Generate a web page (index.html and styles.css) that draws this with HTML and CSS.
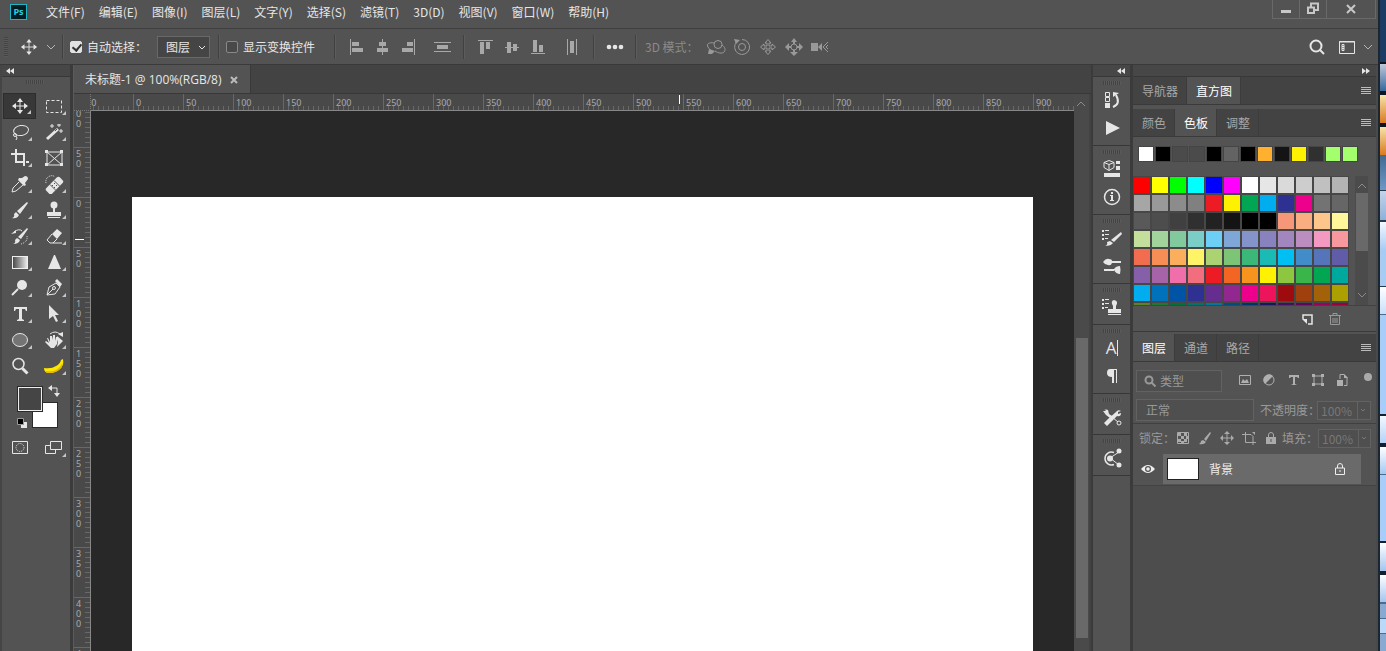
FILE: index.html
```html
<!DOCTYPE html>
<html lang="zh-CN">
<head>
    <meta charset="utf-8">
    <title>未标题-1</title>
    <link rel="stylesheet" href="styles.css">
</head>
<body>
<div class="app">

    <header class="menubar">
        <div class="logo">Ps</div>
        <nav class="menu">
            <a href="#">文件(F)</a>
            <a href="#">编辑(E)</a>
            <a href="#">图像(I)</a>
            <a href="#">图层(L)</a>
            <a href="#">文字(Y)</a>
            <a href="#">选择(S)</a>
            <a href="#">滤镜(T)</a>
            <a href="#">3D(D)</a>
            <a href="#">视图(V)</a>
            <a href="#">窗口(W)</a>
            <a href="#">帮助(H)</a>
        </nav>
        <div class="window-buttons">
            <button aria-label="最小化"><svg viewBox="0 0 20 20"><path d="M5 11h10v3H5z"/></svg></button>
            <button aria-label="还原"><svg viewBox="0 0 20 20" class="line thick"><path d="M8 9V4.500h7V11h-4M5 8.500h6V14H5z"/></svg></button>
            <button aria-label="关闭" class="wide"><svg viewBox="0 0 20 20" class="line thick"><path d="M6 6l8 8M14 6l-8 8"/></svg></button>
        </div>
    </header>

    <div class="options">
        <span class="grip-v"></span>
        <button class="tool-current" aria-label="移动工具">
            <svg viewBox="0 0 20 20" class="line"><path d="M10 3v14M3 10h14"/><path class="fill" d="M10 1l3 4H7zM10 19l3-4H7zM1 10l4-3v6zM19 10l-4-3v6z"/></svg>
        </button>
        <button class="mini" aria-label="预设"><svg viewBox="0 0 10 10" class="line"><path d="M1 3l4 4 4-4"/></svg></button>
        <span class="sep"></span>
        <input type="checkbox" id="auto-select" checked>
        <label for="auto-select" class="auto-label">自动选择：</label>
        <div class="dropdown">
            <select aria-label="自动选择对象"><option>图层</option></select>
            <svg viewBox="0 0 10 10" class="line"><path d="M2 3l3 3 3-3"/></svg>
        </div>
        <span class="sep"></span>
        <input type="checkbox" id="show-transform">
        <label for="show-transform" class="transform-label">显示变换控件</label>
        <span class="sep"></span>
        <div class="align-group first">
            <button aria-label="左对齐"><svg viewBox="0 0 20 20"><path d="M4 2h1v16H4zM6 5h7v4H6zM6 11h11v4H6z"/></svg></button>
            <button aria-label="水平居中对齐"><svg viewBox="0 0 20 20"><path d="M10 2h1v16h-1zM7 5h7v4H7zM5 11h11v4H5z"/></svg></button>
            <button aria-label="右对齐"><svg viewBox="0 0 20 20"><path d="M16 2h1v16h-1zM9 5h6v4H9zM4 11h11v4H4z"/></svg></button>
        </div>
        <div class="align-group">
            <button aria-label="垂直分布"><svg viewBox="0 0 20 20"><path d="M2 5h17v1H2zM5 8h11v4H5zM2 14h17v1H2z"/></svg></button>
        </div>
        <span class="sep"></span>
        <div class="align-group">
            <button aria-label="顶对齐"><svg viewBox="0 0 20 20"><path d="M2 3h15v1H2zM4 5h4v12H4zM10 5h4v7h-4z"/></svg></button>
            <button aria-label="垂直居中对齐"><svg viewBox="0 0 20 20"><path d="M3 10h14v1H3zM5 5h4v11H5zM11 7h4v7h-4z"/></svg></button>
            <button aria-label="底对齐"><svg viewBox="0 0 20 20"><path d="M3 16h14v1H3zM5 3h4v12H5zM11 8h4v7h-4z"/></svg></button>
        </div>
        <div class="align-group">
            <button aria-label="水平分布"><svg viewBox="0 0 20 20"><path d="M5 2h1v16H5zM8 4h4v12H8zM14 2h1v16h-1z"/></svg></button>
        </div>
        <span class="sep"></span>
        <button class="more" aria-label="更多"><svg viewBox="0 0 20 20"><circle cx="4" cy="10" r="2.300"/><circle cx="10" cy="10" r="2.300"/><circle cx="16" cy="10" r="2.300"/></svg></button>
        <span class="sep"></span>
        <span class="mode-label">3D 模式：</span>
        <div class="mode-group">
            <button aria-label="环绕移动"><svg viewBox="0 0 20 20" class="line"><circle cx="12" cy="7.500" r="4"/><path d="M8 6C3 5 0 7 2 10s2 3 3 3M16 8c3 2 4 5 2 7s-6 1-9-1"/><path class="fill" d="M3 12l6 2-3 3H2z"/></svg></button>
            <button aria-label="滚动"><svg viewBox="0 0 20 20" class="line"><circle cx="10" cy="10" r="3.500"/><path d="M5 4.500a7.500 7.500 0 1 0 5-2"/><path class="fill" d="M2 2l6 1-4 4z"/></svg></button>
            <button aria-label="平移"><svg viewBox="0 0 20 20" class="line"><path d="M10 2.500l3 3.500h-2v3h3V7l3.500 3-3.500 3v-2h-3v3h2l-3 3.500L7 14h2v-3H6v2l-3.500-3L6 7v2h3V6H7z"/></svg></button>
            <button aria-label="滑动"><svg viewBox="0 0 20 20"><circle class="stroke" cx="10" cy="10" r="3"/><path d="M10 1l3 4h-2v2H9V5H7zM1 10l4-4v3h2v2H5v3zM19 10l-4-4v3h-2v2h2v3zM10 19l4-4h-3v-2H9v2H6z"/></svg></button>
            <button aria-label="缩放"><svg viewBox="0 0 20 20" class="line"><path class="fill" d="M1 6h7v8H1zM8 10l4-4v8z"/><path d="M18 5l-5 5 5 5M18 8l-2 2 2 2"/></svg></button>
        </div>
        <div class="options-right">
            <button aria-label="搜索"><svg viewBox="0 0 20 20" class="line thick"><circle cx="9" cy="9" r="5.500"/><path d="M13 13l4 4"/></svg></button>
            <button aria-label="工作区"><svg viewBox="0 0 20 20" class="line"><path d="M2.500 4.500h15v12h-15zM2 5h16M5 7.500h2v6H5zM5 9.500h2M5 11.500h2"/></svg></button>
            <button class="mini" aria-label="选择工作区"><svg viewBox="0 0 10 10" class="line"><path d="M1 3l4 4 4-4"/></svg></button>
        </div>
    </div>

    <main class="workspace">

        <aside class="toolbox">
            <div class="collapse"><svg viewBox="0 0 10 10"><path d="M5 2v6L1 5zM9 2v6L5 5z"/></svg></div>
            <div class="grip"></div>
            <div class="tools">
                <button class="has-more active" aria-label="移动"><svg viewBox="0 0 20 20" class="line"><path d="M10 3v14M3 10h14"/><path class="fill" d="M10 2l3 4H7zM10 18l3-4H7zM2 10l4-3v6zM18 10l-4-3v6z"/></svg></button>
                <button class="has-more" aria-label="矩形选框"><svg viewBox="0 0 20 20" class="line"><rect x="2.500" y="4.500" width="15" height="12" stroke-dasharray="3 2"/></svg></button>
                <button class="has-more" aria-label="套索"><svg viewBox="0 0 20 20" class="line"><ellipse cx="11" cy="8.500" rx="7.500" ry="5" transform="rotate(-10 11 8)"/><circle cx="5" cy="13" r="1.500"/><path d="M6 14q2 2 0 4"/></svg></button>
                <button class="has-more" aria-label="魔棒"><svg viewBox="0 0 20 20" class="line"><path stroke-width="3" d="M3 17L14 7"/><path d="M8 2v4M6 4h4M15 2v3M13 3h4M17 7v4M15 9h4"/><path class="cut" d="M11 9l2-2"/></svg></button>
                <button class="has-more" aria-label="裁剪"><svg viewBox="0 0 20 20" class="line thick"><path d="M1 6h13v12M6 1v13h8"/><path class="fill" d="M16 13h3v2h-3z"/></svg></button>
                <button aria-label="图框"><svg viewBox="0 0 20 20" class="line"><path d="M3 4h15v13H3zM3 4l15 13M18 4L3 17"/><path class="fill" d="M1 2h3v3H1zM16 2h3v3h-3zM1 15h3v3H1zM16 15h3v3h-3z"/></svg></button>
                <button class="has-more" aria-label="吸管"><svg viewBox="0 0 20 20" class="line"><path class="fill" d="M12 4l3-2q3 0 3 3l-3 4 1 2-2 1-6-6 1-2z"/><path d="M9 8l-6 6-1 4 4-1 7-6"/></svg></button>
                <button class="has-more" aria-label="修复画笔"><svg viewBox="0 0 20 20"><rect x="1" y="7.500" width="19" height="8" rx="2" transform="rotate(-45 10.500 11.500)"/><path class="cut" d="M6 10.500l6 6M10 6.500l6 6"/><path class="dots" d="M2 9q-1-5 4-7 3-1 5 1"/><path fill="#535353" d="M10 9h1v1h-1zM12 11h1v1h-1zM8 11h1v1H8zM10 13h1v1h-1z"/></svg></button>
                <button class="has-more" aria-label="画笔"><svg viewBox="0 0 20 20"><path d="M17 2l1 1-8 11-3-3zM6 12l3 3q-2 4-7 3 3-1 2-4z"/></svg></button>
                <button class="has-more" aria-label="仿制图章"><svg viewBox="0 0 20 20"><circle cx="10" cy="5" r="3.500"/><path d="M9 7h2v5h6v4H3v-4h6zM4 17h12v1H4z"/></svg></button>
                <button class="has-more" aria-label="历史记录画笔"><svg viewBox="0 0 20 20"><path d="M17 2l1 1-7 10-3-2zM7 12l3 2q-1 4-7 4 3-1 2-4zM1 8l5-4v3z"/><path class="stroke" d="M4 6q5-4 8-1"/><path class="dots" d="M17 10q1 6-6 8"/></svg></button>
                <button class="has-more" aria-label="橡皮擦"><svg viewBox="0 0 20 20" class="line"><path class="fill" d="M8 8l5-5 5 4-5 6z"/><path d="M8 8l-5 6 3 3h3l4-4M9 17h9"/></svg></button>
                <button class="has-more" aria-label="渐变"><svg viewBox="0 0 20 20"><defs><linearGradient id="gray"><stop stop-color="#444"/><stop offset="1" stop-color="#eee"/></linearGradient></defs><rect x="2.500" y="4.500" width="15" height="12" fill="url(#gray)" stroke="#eee"/></svg></button>
                <button class="has-more" aria-label="锐化"><svg viewBox="0 0 20 20"><path d="M10 3h1l6 14H4z"/></svg></button>
                <button class="has-more" aria-label="减淡"><svg viewBox="0 0 20 20" class="line thick"><circle class="fill" cx="12" cy="7" r="5"/><path d="M8 11l-6 6"/></svg></button>
                <button class="has-more" aria-label="钢笔"><svg viewBox="0 0 20 20" class="line"><path d="M3 17l2-8 7-4 4 4-5 7zM3 17l6-6"/><circle cx="10" cy="10" r="1.500"/><path class="fill" d="M11 3l2-2 5 5-2 3z"/></svg></button>
                <button class="has-more" aria-label="文字"><svg viewBox="0 0 20 20"><path d="M4 3h13v4h-1l-1-2h-3v10l2 1v1H7v-1l2-1V5H6L5 7H4z"/></svg></button>
                <button class="has-more" aria-label="路径选择"><svg viewBox="0 0 20 20"><path d="M5 1l10 10h-4l3 6-2 1-3-6-4 3z"/></svg></button>
                <button class="has-more" aria-label="椭圆"><svg viewBox="0 0 20 20" class="line"><ellipse cx="10" cy="10" rx="7.500" ry="6.500" fill="#747474"/></svg></button>
                <button class="has-more" aria-label="抓手"><svg viewBox="0 0 20 20"><path d="M4 8l2 4V6h2l1 4V5h2v6l1-4h2l-1 7-3 4H7l-6-6 1-1 3 2-2-5zM13 6l6 5-6 6 1-5z"/><path class="stroke" d="M6 4q5-4 10 0"/><path d="M14 4l5-2v5z"/></svg></button>
                <button aria-label="缩放"><svg viewBox="0 0 20 20" class="line"><circle cx="8.500" cy="8" r="5.500" stroke-width="1.500"/><path stroke-width="3" d="M12.500 12.500l5 5"/></svg></button>
                <button class="has-more" aria-label="编辑工具栏"><svg viewBox="0 0 20 20"><path fill="#ffe900" d="M0 12q8 1 12-2 4-2 5-6l2-1q1 6-2 9-4 5-12 5-5 0-5-5z"/><path fill="#e5b800" d="M1 15q7 1 11-1 5-3 6-7 1 4-2 6-4 4-11 4-3 0-4-2z"/></svg></button>
            </div>
            <div class="colors">
                <button class="back" aria-label="背景色"></button>
                <button class="front" aria-label="前景色"></button>
                <button class="swap" aria-label="切换颜色"><svg viewBox="0 0 12 12" class="line"><path d="M3 3h6v6"/><path class="fill" d="M4 0v6L0 3zM6 8h6l-3 4z"/></svg></button>
                <button class="reset" aria-label="默认颜色"><svg viewBox="0 0 12 12"><path d="M5 5h6v6H5z"/><path fill="#000" stroke="#999" d="M1.500 1.500h6v6h-6z"/></svg></button>
            </div>
            <div class="tools">
                <button aria-label="快速蒙版"><svg viewBox="0 0 20 20" class="line"><path d="M2.500 3.500h15v12h-15z"/><circle cx="10" cy="9.500" r="4" stroke-dasharray="1 1"/></svg></button>
                <button class="has-more" aria-label="屏幕模式"><svg viewBox="0 0 20 20" class="line"><path d="M6 7.500H1.500v8h10V12M6.500 3.500h11v8h-11z"/></svg></button>
            </div>
        </aside>

        <section class="document">
            <div class="tabs">
                <div class="tab">未标题-1 @ 100%(RGB/8)<button aria-label="关闭文档"><svg viewBox="0 0 10 10" class="line thick"><path d="M2 2l6 6M8 2L2 8"/></svg></button></div>
            </div>
            <div class="view">
                <div class="ruler-corner"></div>
                <div class="ruler ruler-x"><div class="marks" id="marks-x"></div><span class="pointer"></span></div>
                <div class="ruler ruler-y"><div class="marks" id="marks-y"></div><span class="pointer"></span></div>
                <div class="canvas"><div class="page"></div></div>
                <div class="scroll">
                    <svg viewBox="0 0 10 10" class="line"><path d="M1 7l4-4 4 4"/></svg>
                    <div class="thumb"></div>
                </div>
            </div>
        </section>

        <aside class="dock">
            <div class="collapse"><svg viewBox="0 0 10 10"><path d="M5 2v6L1 5zM9 2v6L5 5z"/></svg></div>
            <div class="dock-group">
                <button aria-label="历史记录"><svg viewBox="0 0 20 20" class="line"><path d="M3.500 2.500h4v4h-4zM3.500 7.500h4v4h-4z"/><path class="fill" d="M3 13h5v5H3z"/><path stroke-width="2" d="M11 17q8-3 3-12"/><path class="fill" d="M11 7V2l6 1z"/></svg></button>
                <button aria-label="动作"><svg viewBox="0 0 20 20"><path d="M4 3l14 7-14 7z"/></svg></button>
            </div>
            <div class="dock-group">
                <button aria-label="属性"><svg viewBox="0 0 20 20" class="line"><path d="M7 1.500l5 2v5l-5 3-5-3v-5zM2 3.500l5 2 5-2M7 5.500v6"/><path class="fill" d="M14 2h4v3h-4zM14 7h4v4h-4zM2 14h16v4H2z"/></svg></button>
                <button aria-label="信息"><svg viewBox="0 0 20 20" class="line"><circle cx="10" cy="10" r="7.500" stroke-width="1.500"/><path class="fill" d="M9 5h2v2H9zM8 8h3v5h1v1H8v-1h1V9H8z"/></svg></button>
            </div>
            <div class="dock-group">
                <button aria-label="画笔"><svg viewBox="0 0 20 20"><path d="M0 2h2v2H0zM3 2h4v1H3zM0 6h2v2H0zM3 6h4v1H3zM0 10h2v2H0zM3 10h3v1H3zM19 4l1 2-8 8-3-2zM8 13l3 2q-2 3-8 3 3-1 2-4z"/></svg></button>
                <button aria-label="画笔设置"><svg viewBox="0 0 20 20"><path d="M1 6q3-4 6-3 3 0 3 2h9v2h-9q-1 3-4 2-3 0-5-3zM2 13h10v2H2zM12 13q2-3 6-3 1 4 0 8-4 0-6-4z"/></svg></button>
            </div>
            <div class="dock-group">
                <button aria-label="仿制源"><svg viewBox="0 0 20 20"><path d="M0 2h2v2H0zM3 2h4v1H3zM0 6h2v2H0zM3 6h4v1H3zM0 10h2v2H0zM3 10h3v1H3zM11 9q-3-5 1-6 5 1 2 6v3h5v4H6v-4h5zM6 17h13v1H6z"/></svg></button>
            </div>
            <div class="dock-group">
                <button aria-label="字符"><span class="character">A</span></button>
                <button aria-label="段落"><svg viewBox="0 0 20 20"><path d="M8 3h7v14h-1V4h-2v13h-2v-6q-5 0-5-4t3-4z"/></svg></button>
            </div>
            <div class="dock-group">
                <button aria-label="工具预设"><svg viewBox="0 0 20 20"><path d="M2 2l4 1 1 4 3 2-2 2-4-3-3-4h2l1-1zM14 5q2-3 5-1l-3 1v2l3-1q0 4-4 3l-6 6-4 4-3-3 4-4z"/><path class="stroke" d="M10 10l6 5"/><circle class="stroke" cx="17" cy="16" r="2"/></svg></button>
            </div>
            <div class="dock-group">
                <button aria-label="修改键"><svg viewBox="0 0 20 20" class="line"><path stroke-width="1.500" d="M12 4.500a6.500 6.500 0 1 0 0 12"/><path d="M8 10l9-6M8 10l9 7"/><circle class="fill" cx="8" cy="10.500" r="3"/><circle class="fill" cx="17" cy="3" r="2.500"/><circle class="fill" cx="17" cy="17" r="2.500"/></svg></button>
            </div>
        </aside>

        <aside class="panels">
            <div class="collapse"><svg viewBox="0 0 10 10"><path d="M1 2l4 3-4 3zM5 2l4 3-4 3z"/></svg></div>

            <div class="panel-tabs">
                <button>导航器</button>
                <button class="active">直方图</button>
                <button class="panel-menu" aria-label="面板菜单"></button>
            </div>

            <div class="panel-tabs spaced">
                <button>颜色</button>
                <button class="active">色板</button>
                <button>调整</button>
                <button class="panel-menu" aria-label="面板菜单"></button>
            </div>
            <div class="swatches-panel">
                <div class="recent" id="recent"></div>
                <div class="swatch-box">
                    <div class="swatches" id="swatches"></div>
                    <div class="swatch-scroll">
                        <svg viewBox="0 0 10 10" class="line"><path d="M1 7l4-4 4 4"/></svg>
                        <div class="thumb"></div>
                        <svg viewBox="0 0 10 10" class="line"><path d="M1 3l4 4 4-4"/></svg>
                    </div>
                </div>
                <div class="panel-footer">
                    <button aria-label="新建色板"><svg viewBox="0 0 14 14" class="line thick"><path d="M3 7V3h9v9H8"/><path d="M2 7h5v5z" class="fill"/></svg></button>
                    <button aria-label="删除色板" class="dim"><svg viewBox="0 0 14 14" class="line"><path d="M1 3.500h12M5 3V1.500h4V3M2.500 4v8.500h9V4M5 6v5M7 6v5M9 6v5"/></svg></button>
                </div>
            </div>

            <div class="panel-tabs layers-tabs">
                <button class="active">图层</button>
                <button>通道</button>
                <button>路径</button>
                <button class="panel-menu" aria-label="面板菜单"></button>
            </div>
            <div class="layers-panel">
                <div class="filter-row">
                    <div class="field filter-field">
                        <svg viewBox="0 0 14 14" class="line thick"><circle cx="6" cy="6" r="3.500"/><path d="M8.500 8.500l4 4"/></svg>
                        <select aria-label="筛选类型"><option>类型</option></select>
                    </div>
                    <div class="filter-icons">
                        <button aria-label="像素图层"><svg viewBox="0 0 14 14" class="line"><path d="M1.500 2.500h11v9h-11z"/><path class="fill" d="M3 10l2-4 2 2 2-2 2 4z"/></svg></button>
                        <button aria-label="调整图层"><svg viewBox="0 0 14 14" class="line"><circle cx="7" cy="7" r="5"/><path class="fill" d="M3 11a5 5 0 0 1 8-8z"/></svg></button>
                        <button aria-label="文字图层"><svg viewBox="0 0 14 14"><path d="M2 2h10v3h-1l-1-1H8v7l2 1H4l2-1V4H4L3 5H2z"/></svg></button>
                        <button aria-label="形状图层"><svg viewBox="0 0 14 14" class="line"><path d="M3 3h8v8H3z"/><path class="fill" d="M1 1h3v3H1zM10 1h3v3h-3zM1 10h3v3H1zM10 10h3v3h-3z"/></svg></button>
                        <button aria-label="智能对象"><svg viewBox="0 0 14 14" class="line"><path d="M5 6V1.500h4l3 3v8H9"/><path class="fill" d="M2 7h6v6H2zM9 1l4 4H9z"/></svg></button>
                    </div>
                    <span class="filter-toggle"></span>
                </div>
                <div class="blend-row">
                    <select class="field blend" aria-label="混合模式"><option>正常</option></select>
                    <label for="opacity">不透明度：</label>
                    <div class="field percent"><input id="opacity" type="text" value="100%"><button aria-label="调整不透明度"><svg viewBox="0 0 10 10" class="line"><path d="M3 4l2 2 2-2"/></svg></button></div>
                </div>
                <div class="lock-row">
                    <span class="lock-label">锁定：</span>
                    <div class="lock-icons">
                        <button aria-label="锁定透明像素"><svg viewBox="0 0 14 14" class="line"><path d="M1.500 1.500h11v11h-11z"/><path class="fill" d="M2 2h3v3H2zM8 2h3v3H8zM5 5h3v3H5zM10 5h3v3h-3zM2 8h3v3H2zM8 8h3v3H8zM5 10h3v3H5z"/></svg></button>
                        <button aria-label="锁定图像像素"><svg viewBox="0 0 14 14"><path d="M12 1l1 1-5 8-2-2zM5 9l3 2q-2 3-7 2 2-1 2-3z"/></svg></button>
                        <button aria-label="锁定位置"><svg viewBox="0 0 14 14" class="line"><path d="M7 2v10M2 7h10"/><path class="fill" d="M7 0l3 3H4zM7 14l3-3H4zM0 7l3-3v6zM14 7l-3-3v6z"/></svg></button>
                        <button aria-label="防止嵌套"><svg viewBox="0 0 14 14" class="line"><path d="M0 3.500h9l2 2V14M3.500 1v10.500H14"/><path class="fill" d="M10 1h3v3z"/></svg></button>
                        <button aria-label="锁定全部"><svg viewBox="0 0 14 14"><path d="M2 6h10v7H2z"/><path class="stroke" d="M4.500 6V4q0-2.500 2.500-2.500T9.500 4v2"/><path class="cut" d="M7 8v3"/></svg></button>
                    </div>
                    <label for="fill">填充：</label>
                    <div class="field percent"><input id="fill" type="text" value="100%"><button aria-label="调整填充"><svg viewBox="0 0 10 10" class="line"><path d="M3 4l2 2 2-2"/></svg></button></div>
                </div>
                <div class="layer">
                    <button class="eye" aria-label="图层可见性"><svg viewBox="0 0 14 14"><path fill-rule="evenodd" d="M0 7q7-8 14 0-7 8-14 0zM7 4a3 3 0 1 0 0 6 3 3 0 0 0 0-6z"/><circle cx="7" cy="7" r="1.800"/></svg></button>
                    <div class="layer-body">
                        <div class="layer-thumb"></div>
                        <span>背景</span>
                        <svg viewBox="0 0 14 14" class="line"><path d="M2.500 6h9v6.500h-9zM4.500 6V4q0-2.500 2.500-2.500T9.500 4v2M7 8v2"/></svg>
                    </div>
                </div>
            </div>
            <div class="layers-empty"></div>
        </aside>
    </main>
</div>
<div class="desktop"></div>
<script src="script.js"></script>
</body>
</html>
```
FILE: styles.css
```css
* {
    box-sizing: border-box;
}

body {
    margin: 0;
    display: flex;
    height: 100vh;
    overflow: hidden;
    background: #2b2b2b;
    color: #e6e6e6;
    font: 12px/16px "Noto Sans CJK SC", sans-serif;
}

button, input, select {
    margin: 0;
    padding: 0;
    border: 0;
    background: none;
    color: inherit;
    font: inherit;
}

button {
    display: flex;
    align-items: center;
    justify-content: center;
    flex: none;
}

select {
    appearance: none;
}

a {
    color: inherit;
    text-decoration: none;
}

svg {
    display: block;
    flex: none;
    width: 20px;
    height: 20px;
    fill: currentColor;
}

.line, .stroke {
    fill: none;
    stroke: currentColor;
}

.thick {
    stroke-width: 2;
}

.fill {
    fill: currentColor;
    stroke: none;
}

.cut {
    fill: none;
    stroke: #535353;
}

.dots {
    fill: none;
    stroke: currentColor;
    stroke-dasharray: 1 1;
}

.app {
    flex: 1;
    min-width: 0;
    display: flex;
    flex-direction: column;
    background: #535353;
}

/* menu bar */
.menubar {
    display: flex;
    align-items: flex-start;
    height: 28px;
    padding: 4px 2px 0 10px;
}

.logo {
    width: 17px;
    height: 16px;
    margin-right: 19px;
    border: 1px solid #1fb5c4;
    background: #001d26;
    color: #2cd0e0;
    font: bold 9px/14px "Open Sans", sans-serif;
    text-align: center;
}

.menu {
    display: flex;
    gap: 14px;
    white-space: nowrap;
}

.window-buttons {
    display: flex;
    margin: -4px 0 0 auto;
    border: 1px solid #696969;
    border-top: 0;
    color: #c8c8c8;
}

.window-buttons button {
    width: 27px;
    height: 18px;
    border-right: 1px solid #696969;
}

.window-buttons .wide {
    width: 48px;
    border: 0;
}

/* options bar */
.options {
    display: flex;
    align-items: center;
    height: 37px;
    padding: 0 5px 0 4px;
    border-top: 1px solid #3e3e3e;
    border-bottom: 1px solid #3a3a3a;
    white-space: nowrap;
}

.grip-v {
    width: 4px;
    height: 20px;
    background: repeating-linear-gradient(#434343 0 1px, #5a5a5a 1px 2px);
}

.tool-current {
    width: 18px;
    margin: 0 8px 0 12px;
}

.tool-current svg {
    width: 18px;
    height: 18px;
}

.mini svg, .dropdown svg {
    width: 10px;
    height: 10px;
}

.mini {
    color: #b5b5b5;
}

.sep {
    width: 2px;
    height: 24px;
    margin: 0 6px;
    border-left: 1px solid #414141;
    background: #5c5c5c;
}

input[type="checkbox"] {
    appearance: none;
    flex: none;
    width: 12px;
    height: 12px;
    border: 1px solid #888;
    border-radius: 2px;
    background: #494949;
}

input[type="checkbox"]:checked {
    border-color: #e2e2e2;
    background: #e2e2e2;
}

input[type="checkbox"]:checked::before {
    content: "";
    display: block;
    width: 4px;
    height: 7px;
    margin: 0 3px;
    border: solid #333;
    border-width: 0 2px 2px 0;
    transform: rotate(40deg);
}

.auto-label {
    width: 70px;
    margin-left: 5px;
}

.dropdown {
    position: relative;
    margin-right: 2px;
}

.dropdown select {
    width: 53px;
    height: 22px;
    padding-left: 8px;
    border: 1px solid #686868;
    background: #454545;
}

.dropdown svg {
    position: absolute;
    right: 3px;
    top: 7px;
}

.transform-label {
    margin: 0 13px 0 5px;
}

.align-group {
    display: flex;
    gap: 6px;
    margin: 0 5px;
    color: #a8a8a8;
}

.align-group + .align-group {
    margin-left: 9px;
}

.align-group.first {
    margin-left: 4px;
}

.more {
    margin: 0 4px;
}

.mode-label {
    width: 61px;
    margin-left: 2px;
    color: #8a8a8a;
}

.mode-group {
    display: flex;
    gap: 6px;
    color: #999;
}

.options-right {
    display: flex;
    gap: 10px;
    margin-left: auto;
}

.options-right .mini {
    margin-left: -4px;
}

/* workspace */
.workspace {
    flex: 1;
    display: flex;
    min-height: 0;
}

.collapse {
    height: 12px;
    padding: 1px 5px;
    border-bottom: 1px solid #383838;
    background: #474747;
}

.collapse svg {
    width: 10px;
    height: 10px;
}

.toolbox {
    flex: none;
    width: 73px;
    border-left: 2px solid #454545;
    border-right: 3px solid #3b3b3b;
}

.toolbox .collapse {
    padding-left: 3px;
}

.grip {
    width: 18px;
    height: 4px;
    margin: 3px 0 9px 24px;
    background: repeating-linear-gradient(90deg, #444 0 1px, #5a5a5a 1px 2px);
}

.tools {
    display: grid;
    grid-template-columns: 33px 33px;
    column-gap: 1px;
    padding-left: 1px;
}

.tools button {
    position: relative;
    height: 26px;
}

.tools .active {
    border: 1px solid #2d2d2d;
    background: #383838;
}

.has-more::after {
    content: "";
    position: absolute;
    right: 4px;
    bottom: 4px;
    border: 2px solid;
    border-color: transparent #c5c5c5 #c5c5c5 transparent;
}

.colors {
    position: relative;
    height: 56px;
}

.colors button {
    position: absolute;
}

.colors .front, .colors .back {
    width: 26px;
    height: 26px;
    border: 1px solid #2a2a2a;
}

.colors .front {
    left: 15px;
    top: 7px;
    background: #454545;
    outline: 1px solid #eee;
    outline-offset: -2px;
}

.colors .back {
    left: 30px;
    top: 23px;
    background: #fff;
}

.colors .swap {
    left: 46px;
    top: 6px;
}

.colors .reset {
    left: 14px;
    top: 38px;
}

.colors svg {
    width: 12px;
    height: 12px;
}

/* document */
.document {
    flex: 1;
    min-width: 0;
    display: flex;
    flex-direction: column;
    border-left: 1px solid #5b5b5b;
    background: #434343;
}

.tabs {
    display: flex;
    height: 29px;
    border-bottom: 1px solid #383838;
}

.tab {
    display: flex;
    align-items: center;
    gap: 8px;
    width: 177px;
    padding: 1px 0 0 11px;
    border-right: 1px solid #393939;
    background: #535353;
    font-family: "Open Sans", "Noto Sans CJK SC", sans-serif;
    white-space: nowrap;
}

.tab svg {
    width: 10px;
    height: 10px;
    color: #bbb;
}

.view {
    flex: 1;
    min-height: 0;
    display: grid;
    grid-template-columns: 17px 1fr 15px;
    grid-template-rows: 17px 1fr;
    padding-right: 2px;
}

.ruler-corner {
    border-right: 1px dotted #777;
    border-bottom: 1px dotted #777;
    background: #4b4b4b;
}

.ruler {
    position: relative;
    overflow: hidden;
    background: #494949;
    color: #aaa;
    font: 9px/10px "Noto Sans", sans-serif;
}

.ruler-x {
    border-bottom: 1px solid #888;
}

.ruler-y {
    grid-row: 2;
    grid-column: 1;
    border-right: 1px solid #888;
}

.marks {
    display: flex;
}

.marks span {
    flex: none;
}

.ruler-x .marks {
    margin-left: -8px;
}

.ruler-x .marks span {
    width: 50px;
    height: 16px;
    padding: 4px 0 0 2px;
    border-left: 1px solid #686868;
    background: repeating-linear-gradient(90deg, transparent 0 4px, #686868 4px 5px) left bottom / 100% 4px no-repeat;
}

.ruler-y .marks {
    flex-direction: column;
    margin-top: -14px;
}

.ruler-y .marks span {
    height: 50px;
    padding: 1px 10px 0 2px;
    border-top: 1px solid #686868;
    background: repeating-linear-gradient(transparent 0 4px, #686868 4px 5px) right top / 5px 100% no-repeat;
    word-break: break-all;
}

.ruler .pointer {
    position: absolute;
    background: #fff;
}

.ruler-x .pointer {
    left: 588px;
    top: 1px;
    width: 1px;
    height: 9px;
}

.ruler-y .pointer {
    left: 1px;
    top: 128px;
    width: 9px;
    height: 1px;
}

.canvas {
    display: flex;
    grid-row: 2;
    grid-column: 2;
    padding: 86px 41px 0;
    background: #282828;
}

.page {
    flex: 1;
    background: #fff;
}

.scroll {
    grid-row: 1 / 3;
    grid-column: 3;
    display: flex;
    flex-direction: column;
    padding: 5px 1px 13px 2px;
    background: #4a4a4a;
}

.scroll svg, .swatch-scroll svg {
    width: 10px;
    height: 10px;
    color: #8b8b8b;
}

.scroll .thumb {
    height: 300px;
    margin-top: auto;
    background: #696969;
}

/* icon dock */
.dock {
    flex: none;
    width: 40px;
    border-left: 2px solid #3b3b3b;
    border-right: 1px solid #3b3b3b;
}

.dock .collapse svg {
    margin-left: 18px;
}

.dock-group {
    padding: 9px 2px 3px 1px;
    border-bottom: 1px solid #373737;
    background: repeating-linear-gradient(90deg, #444 0 1px, #5a5a5a 1px 2px) 10px 4px / 18px 4px no-repeat;
}

.dock-group button {
    width: 36px;
    height: 28px;
}

.character {
    padding-right: 1px;
    border-right: 1px solid;
    font: 17px/16px "Open Sans", sans-serif;
}

/* panels */
.panels {
    flex: none;
    display: flex;
    flex-direction: column;
    width: 247px;
    border-left: 2px solid #3b3b3b;
    border-right: 2px solid #4a4a4a;
    background: #535353;
}

.panels .collapse svg {
    margin-left: auto;
}

.panel-tabs {
    display: flex;
    flex: none;
    height: 28px;
    border-bottom: 1px solid #3a3a3a;
    background: #434343;
    color: #a8a8a8;
}

.panel-tabs.spaced {
    margin-top: 4px;
}

.layers-tabs {
    margin-top: 2px;
}

.panel-tabs button {
    padding: 0 8px 0 9px;
    border-right: 1px solid #3c3c3c;
}

.panel-tabs .active {
    background: #535353;
    color: #fff;
}

.panel-tabs .panel-menu {
    width: 10px;
    height: 7px;
    margin: 10px 5px 0 auto;
    padding: 0;
    border: 0;
    background: repeating-linear-gradient(#bbb 0 1px, transparent 1px 2px);
}

.swatches-panel {
    padding-top: 9px;
    border-bottom: 1px solid #3a3a3a;
}

.recent {
    display: flex;
    gap: 1px;
    padding-left: 5px;
}

.recent button {
    width: 16px;
    height: 16px;
    border: 1px solid #454545;
}

.swatch-box {
    display: flex;
    gap: 6px;
    height: 130px;
    margin-top: 14px;
    border-bottom: 1px solid #424242;
    overflow: hidden;
}

.swatches {
    display: grid;
    grid-template-columns: repeat(12, 18px);
    grid-auto-rows: 18px;
}

.swatches button {
    border: 1px solid #474747;
}

.swatch-scroll {
    display: flex;
    flex-direction: column;
    align-items: center;
    width: 13px;
    padding: 5px 0;
    background: #4b4b4b;
}

.swatch-scroll .thumb {
    width: 12px;
    height: 58px;
    margin: 2px 0 auto;
    background: #696969;
}

.panel-footer {
    display: flex;
    justify-content: flex-end;
    gap: 14px;
    height: 25px;
    padding-right: 34px;
}

.panel-footer svg, .filter-row svg, .lock-row svg, .layer svg {
    width: 14px;
    height: 14px;
}

.dim {
    color: #999;
}

.panel-footer .thick {
    stroke-width: 1.5;
}

.layers-panel {
    color: #999;
}

.filter-row {
    display: flex;
    align-items: center;
    height: 38px;
    padding: 0 4px 0 3px;
}

.field {
    display: flex;
    align-items: center;
    height: 22px;
    border: 1px solid #626262;
    background: #4f4f4f;
}

.filter-field {
    width: 86px;
    padding-left: 6px;
    gap: 3px;
}

.filter-icons {
    display: flex;
    flex: 1;
    justify-content: space-between;
    margin: 0 15px 2px 16px;
    color: #b0b0b0;
}

.filter-toggle {
    width: 8px;
    height: 8px;
    margin-bottom: 8px;
    border-radius: 4px;
    background: #aaa;
}

.blend-row, .lock-row {
    display: flex;
    align-items: center;
    padding: 0 5px 0 3px;
    white-space: nowrap;
}

.blend-row {
    height: 24px;
    padding-bottom: 3px;
    border-bottom: 1px solid #404040;
}

.blend {
    width: 118px;
    padding-left: 9px;
}

.blend-row label {
    width: 57px;
    margin-left: 6px;
}

.percent {
    width: 54px;
    height: 19px;
    margin-left: auto;
    color: #777;
}

.percent input {
    width: 40px;
    height: 17px;
    padding-left: 3px;
    border-right: 1px solid #626262;
}

.percent svg {
    width: 10px;
    height: 10px;
}

.lock-row {
    height: 28px;
}

.lock-label {
    width: 33px;
    margin-left: 3px;
}

.lock-icons {
    display: flex;
    gap: 8px;
    width: 112px;
    padding-left: 4px;
    color: #aaa;
}

.layer {
    display: flex;
    height: 34px;
    padding: 2px 15px 1px 0;
    border-bottom: 1px solid #434343;
    color: #eee;
}

.eye {
    width: 30px;
}

.layer-body {
    flex: 1;
    display: flex;
    align-items: center;
    gap: 10px;
    padding: 0 14px 0 4px;
    background: #6a6a6a;
}

.layer-body svg {
    margin-left: auto;
}

.layer-thumb {
    width: 32px;
    height: 22px;
    border: 1px solid #222;
    background: #fff;
}

.layers-empty {
    flex: 1;
    background: #4d4d4d;
}

/* strip of the desktop behind the window */
.desktop {
    flex: none;
    width: 8px;
    border-left: 2px solid #1c2630;
    background: linear-gradient(
        #1c3c63 0 62px, #10141c 62px 64px,
        #c0c8d8 64px, #35689b 91px, #10141c 91px 95px,
        #f8e3a8 95px, #d97a1e 123px, #10141c 123px 127px,
        #f8e3a8 127px, #d97a1e 155px, #43698f 155px,
        #6f98c6 190px, #26384c 190px 191px,
        #c4d3ea 191px, #8fb0d8 220px, #26384c 220px 222px,
        #f4f8ff 222px, #a8cbf2 250px, #a8cbf2 286px, #26384c 286px 287px,
        #fff 287px, #c8def8 314px, #4d6c8c 314px 315px,
        #a8cdf8 315px 414px, #14202e 414px 416px,
        #f4f8ff 416px, #b4d2f4 443px, #14202e 443px 447px,
        #fff 447px, #a4c8f0 474px, #4d6c8c 474px 475px,
        #a8cdf8 475px 541px, #14202e 541px 543px,
        #fff 543px, #a4c4ec 571px, #14202e 571px 575px,
        #fff 575px, #a4c4ec 602px, #4d6c8c 602px 604px,
        #89a9d0 604px 618px, #4d6c8c 618px 619px,
        #bcd8f8 619px 633px, #4d6c8c 633px 634px, #89a9d0 634px);
}
```
FILE: script.js
```js
const recent = [
    '#ffffff', '#000000', '#4b4b4b', '#4b4b4b', '#000000', '#636363', '#000000',
    '#ffb02e', '#141414', '#fff200', '#303030', '#a3ff6b', '#a3ff6b'
];

const swatches = [
    '#ff0000', '#ffff00', '#00ff00', '#00ffff', '#0000ff', '#ff00ff', '#ffffff', '#e6e6e6', '#dadada', '#cdcdcd', '#c0c0c0', '#b3b3b3',
    '#a6a6a6', '#999999', '#8c8c8c', '#808080', '#ed1c24', '#fff200', '#00a651', '#00aeef', '#2e3192', '#ec008c', '#737373', '#666666',
    '#595959', '#4d4d4d', '#404040', '#303030', '#222222', '#141414', '#000000', '#000000', '#f7977a', '#f9ad81', '#fdc68a', '#fff79a',
    '#c4df9b', '#a2d39c', '#82ca9d', '#7bcdc8', '#6ecff6', '#7ea7d8', '#8493ca', '#8882be', '#a187be', '#bc8dbf', '#f49ac2', '#f6989d',
    '#f26c4f', '#f68e55', '#fbaf5c', '#fff467', '#acd372', '#7cc576', '#3bb878', '#1abbb4', '#00bff3', '#438cca', '#5574b9', '#605ca8',
    '#855fa8', '#a763a8', '#f06ea9', '#f26d7d', '#ed1c24', '#f26522', '#f7941d', '#fff200', '#8dc73f', '#39b54a', '#00a651', '#00a99d',
    '#00aeef', '#0072bc', '#0054a6', '#2e3192', '#662d91', '#92278f', '#ec008c', '#ed145b', '#9e0b0f', '#a0410d', '#a36209', '#aba000',
    '#598527', '#1a7b30', '#007236', '#00746b', '#0076a3', '#004b80', '#003471', '#1b1464', '#440e62', '#630460', '#9e005d', '#9e0039'
];

function addSwatches(id, colors) {
    const box = document.getElementById(id);
    colors.forEach(color => {
        const button = document.createElement('button');
        button.style.background = color;
        button.setAttribute('aria-label', color);
        box.appendChild(button);
    });
}

function addMarks(id, from, to) {
    const box = document.getElementById(id);
    for (let value = from; value <= to; value += 50) {
        const mark = document.createElement('span');
        mark.textContent = Math.abs(value);
        box.appendChild(mark);
    }
}

addSwatches('recent', recent);
addSwatches('swatches', swatches);
addMarks('marks-x', -50, 900);
addMarks('marks-y', -100, 450);
```
